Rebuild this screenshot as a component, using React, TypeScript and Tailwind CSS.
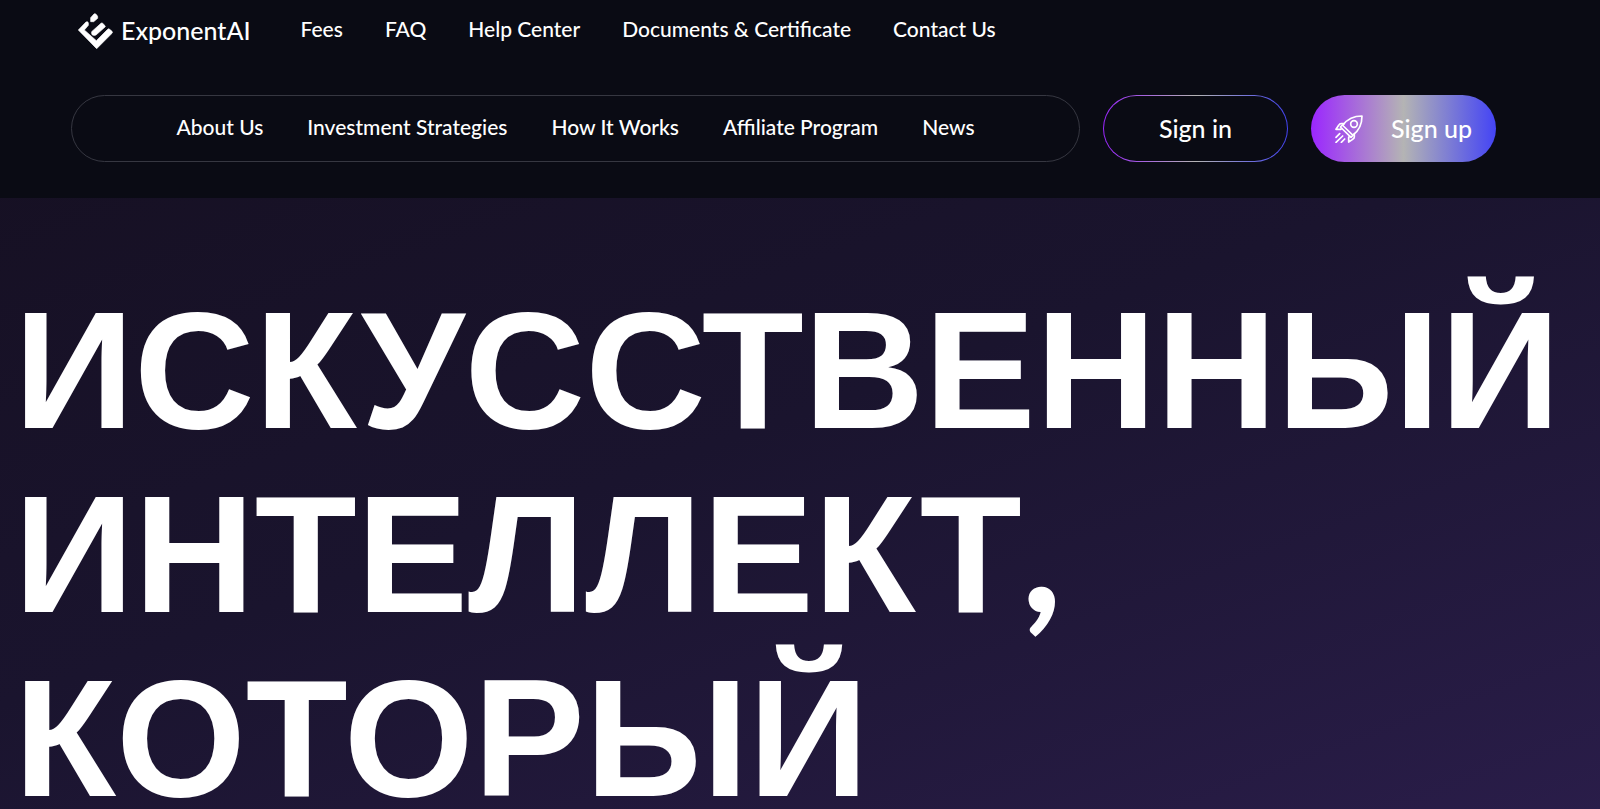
import React from "react";

const topLinks = [
    { label: "Fees", href: "#fees" },
    { label: "FAQ", href: "#faq" },
    { label: "Help Center", href: "#help" },
    { label: "Documents & Certificate", href: "#documents" },
    { label: "Contact Us", href: "#contact" },
];

const mainLinks = [
    { label: "About Us", href: "#about" },
    { label: "Investment Strategies", href: "#strategies" },
    { label: "How It Works", href: "#how-it-works" },
    { label: "Affiliate Program", href: "#affiliate" },
    { label: "News", href: "#news" },
];

const Logo = () => (
    <svg
        width="35"
        height="36"
        viewBox="0 0 105 108"
        fill="white"
        stroke="white"
        strokeWidth="2"
        strokeLinejoin="round"
    >
        <path d="M1 51 24 27Q30 24 31 30V37L19 51 55 83 89 49Q92 46 95 49L102 55Q105 58 102 61L56 107Z" />
        <path d="M38 14 48 3Q50 1 53 3L57 7Q59 9 59 12V16L47 26H38Z" />
        <path d="M41 56 69 31Q71 29 74 31L81 38Q83 40 81 42L54 66Q50 68 46 67 41 66 41 62Z" />
    </svg>
);

const RocketIcon = () => (
    <svg
        width="28"
        height="28"
        viewBox="0 0 84 84"
        fill="none"
        stroke="white"
        strokeWidth="5"
        strokeLinecap="round"
        strokeLinejoin="round"
    >
        <path d="M24 30C38 11 56 3 81 3 81 27 73 46 54 60" />
        <circle cx="57" cy="27" r="10" />
        <path d="M16 36 22 30 54 61 48 67Z" />
        <path d="M27 26H18Q14 26 11 31L3 43H17L20 40" />
        <path d="M58 57V66Q58 70 53 73L41 81V67L44 64" />
        <path d="M14 56 3 67M23 63 3 82M29 72 19 82" />
    </svg>
);

const App = () => {
    return (
        <div className="min-h-screen bg-linear-160 from-[#150f20] via-[#1a142e] to-[#2a1d4a] font-[Lato,sans-serif] text-white">
            <header className="bg-[#0a0b14] pr-[104px] pb-9 pl-[71px]">
                <div className="flex h-[62px] items-center pl-[7px]">
                    <a href="#home" className="flex items-center gap-2">
                        <Logo />
                        <span className="text-[25px] font-medium">
                            ExponentAI
                        </span>
                    </a>
                    <nav className="ml-[50px] flex gap-[42px] pb-1 text-[21px] font-medium">
                        {topLinks.map((link) => (
                            <a key={link.label} href={link.href}>
                                {link.label}
                            </a>
                        ))}
                    </nav>
                </div>
                <div className="mt-[33px] flex h-[67px] gap-[23px]">
                    <nav className="flex flex-1 items-center justify-center gap-11 rounded-full border border-[#363741] pb-1 text-[21px] font-medium">
                        {mainLinks.map((link) => (
                            <a key={link.label} href={link.href}>
                                {link.label}
                            </a>
                        ))}
                    </nav>
                    <button className="w-[185px] rounded-full border border-transparent text-[25px] font-medium [background:linear-gradient(#0a0b14,#0a0b14)_padding-box,linear-gradient(90deg,#9b26ff,#b4b4b4,#4444f5)_border-box]">
                        Sign in
                    </button>
                    <button className="flex w-[185px] items-center justify-between rounded-full bg-[linear-gradient(90deg,#9b26ff,#b4b4b4,#4444f5)] px-6 text-[25px] font-medium">
                        <RocketIcon />
                        Sign up
                    </button>
                </div>
            </header>
            <main className="px-[14px] pt-20">
                <h1 className="font-[Liberation_Sans,sans-serif] text-[167px] leading-[184px] font-bold">
                    ИСКУССТВЕННЫЙ ИНТЕЛЛЕКТ
                    <span className="font-[Lato,sans-serif] leading-none font-black">
                        ,
                    </span>{" "}
                    КОТОРЫЙ
                </h1>
            </main>
        </div>
    );
};

export default App;
